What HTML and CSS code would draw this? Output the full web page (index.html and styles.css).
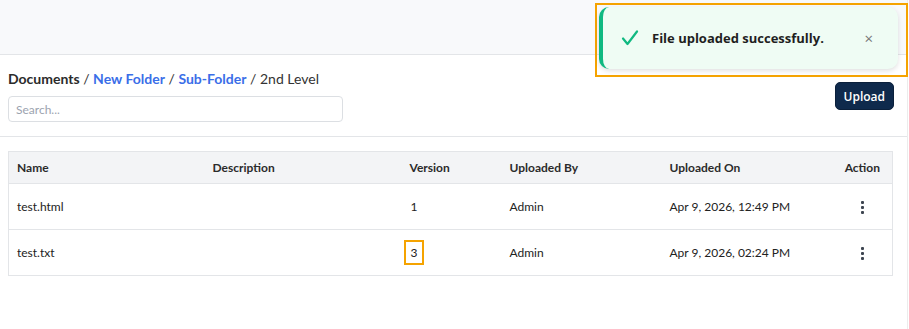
FILE: index.html
```html
<!DOCTYPE html>
<html lang="en">
<head>
    <meta charset="UTF-8">
    <meta name="viewport" content="width=device-width, initial-scale=1.0">
    <title>Documents</title>
    <link rel="stylesheet" href="styles.css">
</head>
<body>
    <div class="page">
        <div class="topbar"></div>
        <div class="toolbar">
            <div class="toolbar-left">
                <p class="crumbs">
                    <strong class="root">Documents</strong> /
                    <a href="#" class="link">New Folder</a> /
                    <a href="#" class="link">Sub-Folder</a> /
                    <span>2nd Level</span>
                </p>
                <input type="text" class="search" placeholder="Search...">
            </div>
            <button class="btn-upload">Upload</button>
        </div>
        <div class="table-wrap">
            <table class="files">
                <colgroup>
                    <col class="c-name">
                    <col class="c-desc">
                    <col class="c-ver">
                    <col class="c-by">
                    <col class="c-on">
                    <col>
                </colgroup>
                <thead>
                    <tr>
                        <th>Name</th>
                        <th>Description</th>
                        <th>Version</th>
                        <th>Uploaded By</th>
                        <th>Uploaded On</th>
                        <th class="right">Action</th>
                    </tr>
                </thead>
                <tbody>
                    <tr>
                        <td>test.html</td>
                        <td></td>
                        <td><span class="ver">1</span></td>
                        <td>Admin</td>
                        <td>Apr 9, 2026, 12:49 PM</td>
                        <td class="right"><span class="kebab"><i></i><i></i><i></i></span></td>
                    </tr>
                    <tr>
                        <td>test.txt</td>
                        <td></td>
                        <td><span class="ver marked">3</span></td>
                        <td>Admin</td>
                        <td>Apr 9, 2026, 02:24 PM</td>
                        <td class="right"><span class="kebab"><i></i><i></i><i></i></span></td>
                    </tr>
                </tbody>
            </table>
        </div>
    </div>

    <div class="toast-frame">
        <div class="toast">
            <svg class="check" width="18" height="16" viewBox="0 0 18 16">
                <path d="M2 8.5 L6.5 14 L16 1.5" fill="none" stroke="#10b981" stroke-width="2.2" stroke-linecap="round" stroke-linejoin="round"/>
            </svg>
            <span class="toast-text">File uploaded successfully.</span>
            <span class="toast-close">&times;</span>
        </div>
    </div>
</body>
</html>
```

FILE: styles.css
```css
body {
    margin: 0;
    font-family: Lato, "Open Sans", Arial, sans-serif;
    color: #222;
    background: #fff;
}
.page {
    width: 907px;
    min-height: 329px;
    border-right: 1px solid #ececec;
}
.topbar {
    height: 54px;
    background: #f8f9fb;
    border-bottom: 1px solid #e3e5e8;
}
.toolbar {
    display: flex;
    justify-content: space-between;
    align-items: center;
    padding: 15px 13px 14px 8px;
    border-bottom: 1px solid #e3e5e8;
}
.crumbs {
    margin: 0 0 9px;
    font-size: 14px;
    color: #333;
}
.crumbs .root {
    font-weight: 700;
    color: #2b2b2b;
}
.link {
    color: #3a6ee8;
    font-weight: 700;
    text-decoration: none;
}
.search {
    display: block;
    width: 335px;
    height: 26px;
    box-sizing: border-box;
    border: 1px solid #dcdfe3;
    border-radius: 4px;
    padding: 0 7px;
    font-family: Lato, sans-serif;
    font-size: 12px;
    outline: none;
}
.search::placeholder {
    color: #9ca3af;
}
.btn-upload {
    background: #0f2a4c;
    color: #fff;
    border: 1px solid #0b203b;
    border-radius: 5px;
    height: 28px;
    padding: 0 8px;
    font-family: "Open Sans", Arial, sans-serif;
    font-size: 12px;
    font-weight: 600;
    margin-top: 0;
}
.table-wrap {
    padding: 14px 14px 0 8px;
}
.files {
    width: 885px;
    table-layout: fixed;
    border-collapse: collapse;
    border: 1px solid #e3e5e8;
    font-size: 12px;
}
.c-name { width: 196px; }
.c-desc { width: 197px; }
.c-ver { width: 100px; }
.c-by { width: 160px; }
.c-on { width: 150px; }
.files th {
    background: #f3f4f6;
    font-weight: 700;
    color: #2b2b2b;
    text-align: left;
    height: 31px;
    padding: 0 8px;
    border-bottom: 1px solid #e3e5e8;
}
.files td {
    height: 45px;
    padding: 0 8px;
    color: #222;
    border-bottom: 1px solid #e3e5e8;
}
.files .right {
    text-align: right;
    padding-right: 12px;
}
.ver {
    display: inline-block;
    padding: 0 1px;
}
.ver.marked {
    margin-left: -6px;
    padding: 3px 5px;
    border: 2px solid #f5a300;
    line-height: 15px;
}
.kebab {
    display: inline-flex;
    flex-direction: column;
    gap: 2px;
    width: 4px;
    margin-right: 15px;
    vertical-align: middle;
}
.kebab i {
    width: 3px;
    height: 3px;
    border-radius: 1px;
    background: #3d4550;
}
.toast-frame {
    position: absolute;
    left: 597px;
    top: 5px;
    width: 305px;
    height: 66px;
    border: 2px solid #f5a300;
    padding: 2px;
    box-sizing: content-box;
    margin: -2px 0 0 -2px;
}
.toast {
    display: flex;
    align-items: center;
    height: 62px;
    width: 299px;
    background: #effcf4;
    border-left: 4px solid #10b981;
    border-radius: 10px;
    box-shadow: 0 2px 5px rgba(0, 0, 0, 0.12);
    box-sizing: border-box;
    padding: 0 25px 0 18px;
    font-family: "Open Sans", Arial, sans-serif;
}
.check {
    margin-right: 13px;
}
.toast-text {
    flex: 1;
    font-size: 13px;
    font-weight: 700;
    color: #1f1f1f;
}
.toast-close {
    font-size: 15px;
    color: #777;
}
```
